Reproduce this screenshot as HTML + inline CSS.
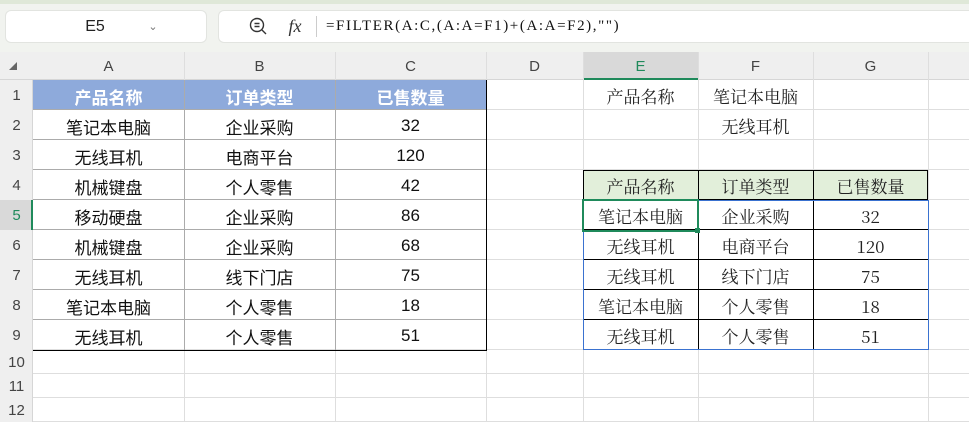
<!DOCTYPE html>
<html><head><meta charset="utf-8"><style>
*{margin:0;padding:0;box-sizing:border-box}
body{width:969px;height:422px;overflow:hidden;background:#fff;position:relative;font-family:"Liberation Sans","Noto Sans CJK SC",sans-serif}
.a{position:absolute}
.c{position:absolute;display:flex;align-items:center;justify-content:center;white-space:nowrap}
.s{font-family:"Noto Serif CJK SC","Liberation Serif",serif;font-size:17px;color:#222}
.n{font-size:17px;color:#111}
</style></head><body>
<div class="a" style="left:0;top:0;width:969px;height:52px;background:#f1f3ef"></div>
<div class="a" style="left:0;top:0;width:969px;height:4px;background:#dfe8d8"></div>
<div class="a" style="left:5px;top:10px;width:202px;height:33px;background:#fff;border-radius:6px;border:1px solid #e2e4e0"></div>
<div class="c" style="left:60px;top:10px;width:70px;height:33px;font-size:16px;color:#222">E5</div>
<div class="c" style="left:146px;top:10px;width:14px;height:33px;font-size:11px;color:#777">&#8964;</div>
<div class="a" style="left:218px;top:10px;width:760px;height:33px;background:#fff;border-radius:6px;border:1px solid #e2e4e0"></div>
<svg class="a" style="left:248px;top:16px" width="20" height="20" viewBox="0 0 20 20"><circle cx="9" cy="9" r="6.5" fill="none" stroke="#333" stroke-width="1.4"/><path d="M14 14l4 4M6.5 7.5h5M6.5 10.5h5" stroke="#333" stroke-width="1.4"/></svg>
<div class="c" style="left:284px;top:10px;width:22px;height:33px;font-family:'Liberation Serif',serif;font-style:italic;font-size:18px;color:#333">fx</div>
<div class="a" style="left:316px;top:16px;width:1px;height:21px;background:#ccc"></div>
<div class="c" style="left:326px;top:10px;height:33px;font-family:'Liberation Serif',serif;font-size:15px;letter-spacing:1.6px;color:#111">=FILTER(A:C,(A:A=F1)+(A:A=F2),"")</div>

<div class="a" style="left:0;top:52px;width:969px;height:28px;background:#efefef;border-bottom:1px solid #d6d6d6"></div>
<div class="a" style="left:583px;top:52px;width:115px;height:28px;background:#d9d9d9;border-bottom:2px solid #1f8a5b"></div>
<svg class="a" style="left:8px;top:61px" width="10" height="10"><path d="M9 1V9H1Z" fill="#666"/></svg>
<div class="a" style="left:0;top:80px;width:33px;height:342px;background:#efefef;border-right:1px solid #d6d6d6"></div>
<div class="a" style="left:0;top:200px;width:33px;height:30px;background:#d9d9d9;border-right:2px solid #1f8a5b"></div>
<div id="g"></div>
<script>
var cols=[[33,184,'A'],[184,335,'B'],[335,486,'C'],[486,583,'D'],[583,698,'E'],[698,813,'F'],[813,928,'G'],[928,1043,'H']];
var rt=[80,110,140,170,200,230,260,290,320,350,374,398,422];
var h='';
cols.forEach(function(c,i){h+='<div class="c" style="left:'+c[0]+'px;top:52px;width:'+(c[1]-c[0])+'px;height:28px;font-size:15px;color:'+(i==4?'#1f8a5b':'#444')+'">'+(i<7?c[2]:'')+'</div>';
h+='<div class="a" style="left:'+c[1]+'px;top:52px;width:1px;height:370px;background:#dedede"></div>';});
for(var r=0;r<12;r++){h+='<div class="c" style="left:0;top:'+rt[r]+'px;width:33px;height:'+(rt[r+1]-rt[r])+'px;font-size:15px;color:'+(r==4?'#1f8a5b':'#444')+'">'+(r+1)+'</div>';
h+='<div class="a" style="left:33px;top:'+(rt[r+1]-1)+'px;width:936px;height:1px;background:#dedede"></div>';}
h+='<div class="a" style="left:33px;top:80px;width:453px;height:30px;background:#8eaadb"></div>';
for(var r=1;r<9;r++)h+='<div class="a" style="left:33px;top:'+(rt[r]-1)+'px;width:453px;height:1px;background:#ababab"></div>';
[184,335].forEach(function(x){h+='<div class="a" style="left:'+x+'px;top:80px;width:1px;height:270px;background:#ababab"></div>';});
h+='<div class="a" style="left:486px;top:80px;width:1px;height:271px;background:#000"></div>';
h+='<div class="a" style="left:33px;top:350px;width:454px;height:1px;background:#000"></div>';
var L=[['产品名称','订单类型','已售数量'],['笔记本电脑','企业采购','32'],['无线耳机','电商平台','120'],['机械键盘','个人零售','42'],['移动硬盘','企业采购','86'],['机械键盘','企业采购','68'],['无线耳机','线下门店','75'],['笔记本电脑','个人零售','18'],['无线耳机','个人零售','51']];
L.forEach(function(row,r){row.forEach(function(t,i){var c=cols[i];h+='<div class="c n" style="left:'+c[0]+'px;top:'+(rt[r]+1)+'px;width:'+(c[1]-c[0])+'px;height:30px;'+(r==0?'color:#fff;font-weight:bold;':'')+'">'+t+'</div>';});});
h+='<div class="c s" style="left:583px;top:80px;width:115px;height:30px">产品名称</div>';
h+='<div class="c s" style="left:698px;top:80px;width:115px;height:30px">笔记本电脑</div>';
h+='<div class="c s" style="left:698px;top:110px;width:115px;height:30px">无线耳机</div>';
h+='<div class="a" style="left:583px;top:170px;width:345px;height:30px;background:#e2efda;border:1px solid #000"></div>';
for(var r=5;r<9;r++)h+='<div class="a" style="left:583px;top:'+(rt[r]-1)+'px;width:345px;height:1px;background:#000"></div>';
[698,813].forEach(function(x){h+='<div class="a" style="left:'+x+'px;top:170px;width:1px;height:180px;background:#000"></div>';});
h+='<div class="a" style="left:583px;top:200px;width:346px;height:150px;border:1.5px solid #3a72d0"></div>';
var R=[['产品名称','订单类型','已售数量'],['笔记本电脑','企业采购','32'],['无线耳机','电商平台','120'],['无线耳机','线下门店','75'],['笔记本电脑','个人零售','18'],['无线耳机','个人零售','51']];
R.forEach(function(row,r){row.forEach(function(t,i){var c=cols[4+i];h+='<div class="c s" style="left:'+c[0]+'px;top:'+rt[r+3]+'px;width:'+(c[1]-c[0])+'px;height:30px">'+t+'</div>';});});
h+='<div class="a" style="left:582px;top:199px;width:117px;height:33px;border:2.5px solid #1f8a5b"></div>';
h+='<div class="a" style="left:695px;top:228px;width:5px;height:5px;background:#1f8a5b"></div>';
document.getElementById('g').innerHTML=h;
</script>
</body></html>
